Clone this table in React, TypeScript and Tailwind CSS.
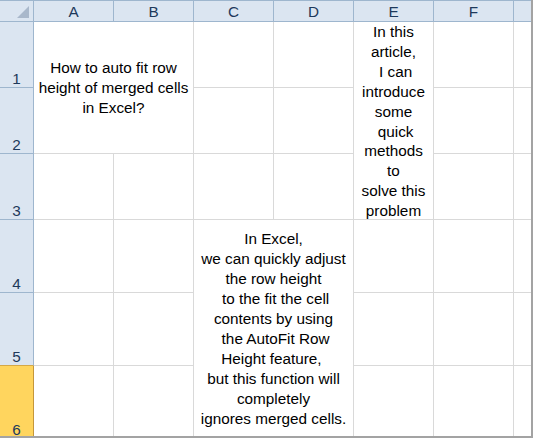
import type { ReactNode } from "react";

const font = { fontFamily: '"Liberation Sans", Arial, sans-serif' };

const cell = "border-r border-b border-[#d9d9d9] bg-white";
const colHead =
  "flex items-center justify-center border-t border-r border-b border-[#9eb6ce] bg-[#dbe5f1] pt-px text-[15.3px] leading-[20px] text-[#1e395b]";

function RowHead({ n, active }: { n: number; active?: boolean }) {
  return (
    <div
      className={
        active
          ? "flex items-end justify-center border-r border-b border-[#c5973a] bg-[#ffd55e] pb-px text-[15.3px] leading-none text-[#1e395b]"
          : n === 5
            ? "flex items-end justify-center border-r border-b border-r-[#9eb6ce] border-b-[#d4a848] bg-[#dbe5f1] pb-px text-[15.3px] leading-none text-[#1e395b]"
            : "flex items-end justify-center border-r border-b border-[#9eb6ce] bg-[#dbe5f1] pb-px text-[15.3px] leading-none text-[#1e395b]"
      }
    >
      {n}
    </div>
  );
}

function Merged({ className, lines }: { className: string; lines: string[] }) {
  return (
    <div className={`${cell} ${className} flex justify-center overflow-hidden`}>
      <p className="whitespace-pre text-center text-[15.3px] text-black">{lines.join("\n")}</p>
    </div>
  );
}

function Empty() {
  return <div className={cell} />;
}

function Row({ children }: { children: ReactNode }) {
  return <>{children}</>;
}

export default function App() {
  return (
    <div className="h-[438px] w-[533px] overflow-hidden bg-[#a3a3a3]" style={font}>
      <div className="h-[436px] w-[531px] overflow-hidden bg-white">
        <div className="grid grid-cols-[34px_repeat(6,80px)_18px] grid-rows-[22px_66px_66px_66px_73px_73px_73px]">
          {/* header row */}
          <div className="flex items-end justify-end border-t border-r border-b border-[#9eb6ce] bg-[#dbe5f1] pr-[4px] pb-[3px]">
            <svg width="12" height="12" viewBox="0 0 12 12">
              <polygon points="12,0 12,12 0,12" fill="#a9b8cb" />
            </svg>
          </div>
          {["A", "B", "C", "D", "E", "F", ""].map((c, i) => (
            <div key={i} className={colHead}>
              {c}
            </div>
          ))}

          <Row>
            <RowHead n={1} />
            <Merged
              className="col-span-2 row-span-2 items-center leading-[20px]"
              lines={["How to auto fit row", "height of merged cells", "in Excel?"]}
            />
            <Empty />
            <Empty />
            <Merged
              className="row-span-3 items-start leading-[19.9px]"
              lines={[
                "In this",
                "article,",
                " I can",
                "introduce",
                "some",
                " quick",
                "methods",
                "to",
                "solve this",
                "problem",
              ]}
            />
            <Empty />
            <Empty />
          </Row>

          <Row>
            <RowHead n={2} />
            <Empty />
            <Empty />
            <Empty />
            <Empty />
          </Row>

          <Row>
            <RowHead n={3} />
            <Empty />
            <Empty />
            <Empty />
            <Empty />
            <Empty />
            <Empty />
          </Row>

          <Row>
            <RowHead n={4} />
            <Empty />
            <Empty />
            <Merged
              className="col-span-2 row-span-3 items-center leading-[19.9px]"
              lines={[
                "In Excel,",
                "we can quickly adjust",
                "the row height",
                " to the fit the cell",
                "contents by using",
                " the AutoFit Row",
                "Height feature, ",
                "but this function will",
                "completely",
                "ignores merged cells.",
              ]}
            />
            <Empty />
            <Empty />
            <Empty />
          </Row>

          <Row>
            <RowHead n={5} />
            <Empty />
            <Empty />
            <Empty />
            <Empty />
            <Empty />
          </Row>

          <Row>
            <RowHead n={6} active />
            <Empty />
            <Empty />
            <Empty />
            <Empty />
            <Empty />
          </Row>
        </div>
      </div>
    </div>
  );
}
